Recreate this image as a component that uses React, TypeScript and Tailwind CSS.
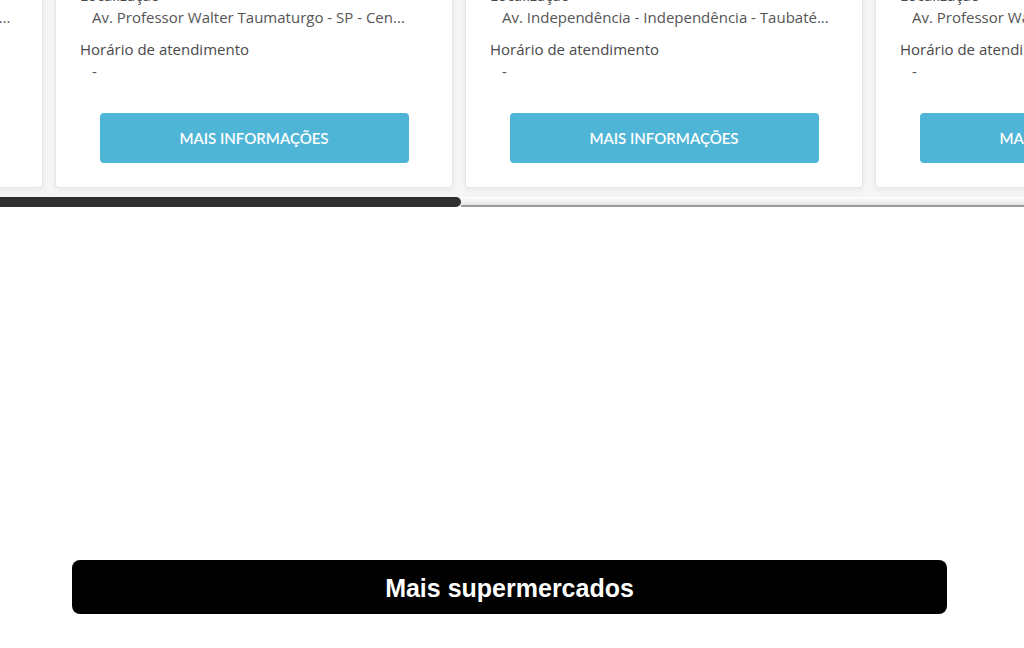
const stores = [
  { address: 'R. Dr. Emílio Winther - Centro - Taubaté - SP - Brasil' },
  { address: 'Av. Professor Walter Taumaturgo - SP - Cen...' },
  { address: 'Av. Independência - Independência - Taubaté...' },
  { address: 'Av. Professor Walter Taumaturgo - SP - Cen...' },
];

function StoreCard({ address }: { address: string }) {
  return (
    <div className="flex w-[398px] shrink-0 flex-col rounded-[4px] border border-[#e6e6e6] bg-white pb-[24px] pl-6 pr-6 shadow-[0_2px_6px_rgba(0,0,0,0.06)]">
      <p className="text-[15px] leading-[22px] text-[#4a4a4a]">Localização</p>
      <p className="truncate pl-3 text-[15px] leading-[22px] text-[#555]">{address}</p>
      <p className="mt-[10px] text-[15px] leading-[22px] text-[#4a4a4a]">Horário de atendimento</p>
      <p className="pl-3 text-[15px] leading-[22px] text-[#555]">-</p>
      <button
        className="mx-auto mt-[31px] h-[50px] w-[309px] rounded-[4px] bg-[#4fb5d6] text-[15px] font-semibold text-white"
        style={{ fontFamily: 'Lato, sans-serif' }}
      >
        MAIS INFORMAÇÕES
      </button>
    </div>
  );
}

export default function App() {
  return (
    <div className="h-[648px] w-full overflow-hidden bg-white" style={{ fontFamily: '"Open Sans", "Noto Sans", sans-serif' }}>
      <div className="overflow-hidden bg-[#f6f6f6] pb-[10px]">
        <div className="-mt-[17px] ml-[-355px] flex gap-3">
          {stores.map((s, i) => (
            <StoreCard key={i} address={s.address} />
          ))}
        </div>
      </div>
      <div className="flex h-[10px] -mt-[1px]">
        <div className="h-[10px] w-[461px] rounded-r-full bg-[#2f2f2f]" />
        <div className="h-[10px] flex-1 border-b-2 border-[#9a9a9a] bg-gradient-to-b from-white to-[#e4e4e4]" />
      </div>
      <div className="mt-[353px] px-[72px] pr-[77px]">
        <button
          className="flex h-[54px] w-full items-center justify-center rounded-lg bg-black pt-1 text-[25px] font-bold text-white"
          style={{ fontFamily: '"Liberation Sans", Arial, sans-serif' }}
        >
          Mais supermercados
        </button>
      </div>
    </div>
  );
}
